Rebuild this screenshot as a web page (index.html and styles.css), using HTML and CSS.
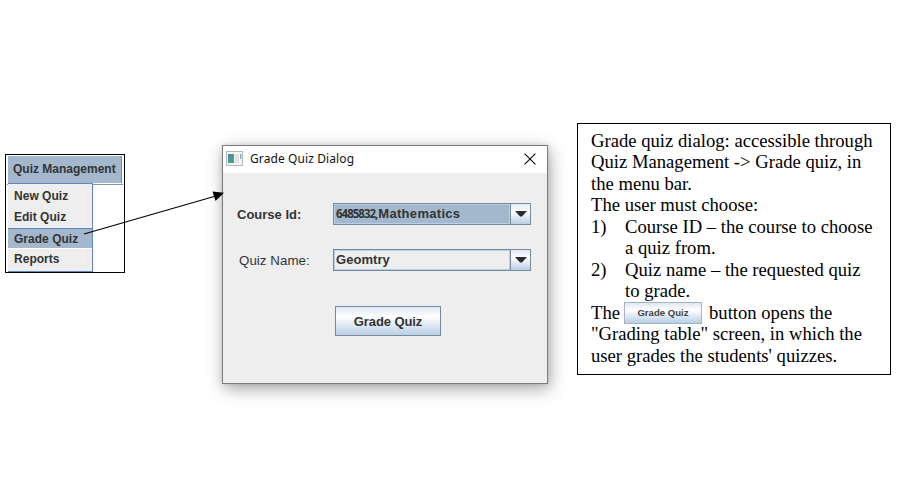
FILE: index.html
```html
<!DOCTYPE html>
<html lang="en">
<head>
<meta charset="utf-8">
<title>Grade Quiz Dialog</title>
<link rel="stylesheet" href="styles.css">
</head>
<body>
<main class="figure">
  <nav class="menu">
    <div class="menu-bar"><div class="menu-title">Quiz Management</div></div>
    <div class="menu-list">
      <div class="menu-item">New Quiz</div>
      <div class="menu-item">Edit Quiz</div>
      <div class="menu-item selected">Grade Quiz</div>
      <div class="menu-item">Reports</div>
    </div>
  </nav>

  <section class="dialog">
    <header class="titlebar">
      <svg class="app-icon" width="17" height="15" viewBox="0 0 17 15">
        <defs><linearGradient id="pane" x1="0" y1="0" x2="1" y2="1"><stop offset="0" stop-color="#4a86b8"/><stop offset="1" stop-color="#4fa672"/></linearGradient></defs>
        <rect x=".5" y=".5" width="16" height="14" fill="#f4f6f7" stroke="#b4b9bd"/>
        <rect x="2" y="3" width="6" height="9" fill="url(#pane)"/>
        <rect x="9" y="3" width="4" height="9" fill="#dfe3e4"/>
        <rect x="14" y="3" width="1.5" height="5" fill="#83b6b2"/>
      </svg>
      <span class="caption">Grade Quiz Dialog</span>
      <svg class="close" width="12" height="12" viewBox="0 0 12 12"><path d="M.6.6 11.4 11.4M11.4.6.6 11.4" stroke="#111" stroke-width="1.2" fill="none"/></svg>
    </header>
    <div class="row row-course">
      <label class="label-course">Course Id:</label>
      <div class="combo focused">
        <span class="value"><span class="code">6485832,</span><span class="course">Mathematics</span></span>
        <span class="drop"><svg width="12" height="6" viewBox="0 0 12 6"><path d="M0 0H12L7 5.5H5Z" fill="#2c2c2c"/></svg></span>
      </div>
    </div>
    <div class="row row-quiz">
      <label class="label-quiz">Quiz Name:</label>
      <div class="combo">
        <span class="value"><span class="quiz">Geomtry</span></span>
        <span class="drop"><svg width="12" height="6" viewBox="0 0 12 6"><path d="M0 0H12L7 5.5H5Z" fill="#2c2c2c"/></svg></span>
      </div>
    </div>
    <button class="grade">Grade Quiz</button>
  </section>

  <aside class="note">
    <p>Grade quiz dialog: accessible through<br>Quiz Management -&gt; Grade quiz, in<br>the menu bar.</p>
    <p>The user must choose:</p>
    <div class="step"><span class="num">1)</span><p>Course ID – the course to choose<br>a quiz from.</p></div>
    <div class="step"><span class="num">2)</span><p>Quiz name – the requested quiz<br>to grade.</p></div>
    <div class="inline-line"><span>The</span><span class="mini">Grade Quiz</span><span>button opens the</span></div>
    <p>"Grading table" screen, in which the<br>user grades the students' quizzes.</p>
  </aside>

  <svg class="arrow" width="150" height="60" viewBox="0 0 150 60">
    <path d="M4 50 135 12.3" stroke="#000" stroke-width="1.1" fill="none"/>
    <path d="M144 8.8 132.5 7.5 135.5 17Z" fill="#000"/>
  </svg>
</main>
</body>
</html>
```

FILE: styles.css
```css
* { box-sizing: border-box; }
body { margin: 0; background: #fff; font-family: "Liberation Sans", Arial, sans-serif; color: #333; }
p { margin: 0; }
.figure { position: relative; display: flex; align-items: flex-start; width: 900px; height: 500px; overflow: hidden; white-space: nowrap; }

.menu { width: 120px; height: 119px; margin: 154px 0 0 5px; border: 1px solid #000; padding: 1px; font-weight: bold; font-size: 12px; }
.menu-bar { height: 29px; border-bottom: 1px solid #8294ab; background: #fff; }
.menu-title { width: 114px; height: 27px; padding-left: 5px; margin-left: 1px; line-height: 27px; background: #a3b8cc; border-right: 1px solid #7a8a99; }
.menu-list { width: 85px; height: 89px; margin-top: -2px; margin-left: 1px; position: relative; background: #eee; border: 1px solid #6382bf; border-left: 0; padding-top: 2px; }
.menu-item { height: 21px; line-height: 21px; padding-left: 6px; letter-spacing: .02px; }
.menu-item.selected { background: #a3b8cc; border-top: 1px solid #6382bf; border-bottom: 1px solid #fff; line-height: 20px; }

.dialog { width: 326px; height: 239px; margin: 145px 0 0 97px; background: #eee; border: 1px solid #7b7d7c; box-shadow: 2px 5px 16px rgba(0,0,0,.34), 0 0 5px rgba(0,0,0,.12); }
.titlebar { display: flex; align-items: center; height: 27px; padding: 0 11px 0 3px; background: #fff; }
.app-icon, .close { position: relative; top: -1px; }
.caption { margin-left: 7px; font: 12px/26px "Noto Sans", sans-serif; letter-spacing: .1px; color: #111; align-self: flex-start; }
.close { margin-left: auto; }
.row { display: flex; align-items: center; height: 22px; }
.row-course { margin-top: 30px; }
.row-quiz { margin-top: 24px; }
.row label { width: 110px; font-size: 13px; }
.row .label-course { padding-left: 14px; font-weight: bold; }
.row .label-quiz { padding-left: 16px; font-size: 13.3px; letter-spacing: .05px; }
.combo { display: flex; width: 198px; height: 22px; border: 1px solid #7a8a99; font-weight: bold; font-size: 12px; }
.value { display: flex; align-items: center; width: 176px; padding: 0 0 1px 1px; border: 1px solid #b8cfe5; }
.focused .value { background: #a3b8cc; }
.drop { display: flex; align-items: center; justify-content: center; flex: 1; border-left: 1px solid #7a8a99; background: linear-gradient(#e1ebf5, #fff 38%, #b8cfe5); }
.code { font: bold 11.5px "Noto Sans", sans-serif; letter-spacing: -1px; margin-right: 1px; }
.course { font-size: 13px; letter-spacing: .3px; }
.quiz { font-size: 13px; letter-spacing: .05px; }
.grade { display: block; width: 106px; height: 30px; margin: 35px 0 0 112px; padding: 0; border: 1px solid #7a8a99; background: linear-gradient(#dde8f3, #fff 35%, #b8cfe5); color: #333; font: bold 13px "Liberation Sans", sans-serif; letter-spacing: -.1px; }

.note { width: 314px; height: 252px; margin: 123px 0 0 29px; border: 1px solid #000; padding: 6px 0 0 13px; color: #000; font: 18.65px/21.45px "Liberation Serif", "Times New Roman", serif; }
.step { display: flex; }
.num { width: 34px; }
.inline-line { display: flex; height: 21.45px; }
.mini { width: 78px; height: 22px; margin: 0 7px 0 4px; border: 1px solid #a5b3c2; background: linear-gradient(#dde8f3, #fff 35%, #b8cfe5); color: #444; font: bold 9.6px/20px "Liberation Sans", sans-serif; text-align: center; }

.arrow { position: absolute; left: 80px; top: 184px; }
```
